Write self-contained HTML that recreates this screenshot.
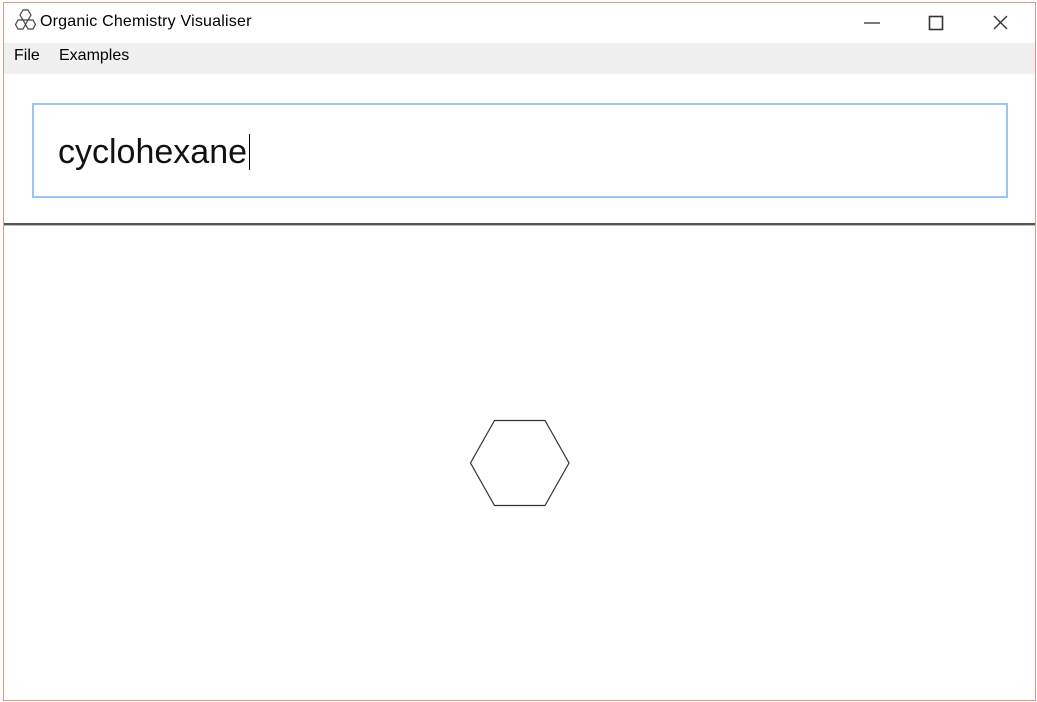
<!DOCTYPE html>
<html><head><style>
body{margin:0;width:1037px;height:702px;background:#fff;position:relative;overflow:hidden;font-family:"Segoe UI","Liberation Sans",sans-serif;}
.win{position:absolute;left:3px;top:2px;width:1031px;height:697px;border:1px solid #d49a88;background:#fff;}
.title{position:absolute;left:40px;top:13px;font-size:16px;color:#000;letter-spacing:0.2px;}
.menu{position:absolute;left:4px;top:43px;width:1031px;height:31px;background:#f0f0f0;font-size:16px;}
.menu span{position:absolute;top:4px;}
.input{position:absolute;left:32px;top:103px;width:972px;height:91px;border:2px solid #99c5f2;box-sizing:content-box;}
.input .t{position:absolute;left:24px;top:28px;font-size:34px;color:#111;}
.caret{display:inline-block;width:1px;height:36px;background:#000;vertical-align:-7px;margin-left:2px;}
.sep{position:absolute;left:4px;top:223px;width:1031px;height:2px;background:#555;border-bottom:1px solid #bbb;}
</style></head><body>
<div class="win"></div>
<svg style="position:absolute;left:13px;top:9px" width="26" height="25" viewBox="0 0 26 25" fill="none" stroke="#444" stroke-width="1.2">
<polygon points="10,1 15,1 18,6 15,11 10,11 7,6"/>
<polygon points="5,11 10,11 12.5,15.5 10,20 5,20 2.5,15.5"/>
<polygon points="15,11 20,11 22.5,15.5 20,20 15,20 12.5,15.5"/>
</svg>
<div class="title">Organic Chemistry Visualiser</div>
<svg style="position:absolute;left:860px;top:12px" width="160" height="22" fill="none" stroke="#333" stroke-width="1.3">
<line x1="4" y1="11" x2="20" y2="11"/>
<rect x="69.5" y="4.5" width="13" height="13" stroke-width="1.6"/>
<line x1="134" y1="4" x2="147" y2="17"/><line x1="147" y1="4" x2="134" y2="17"/>
</svg>
<div class="menu"><span style="left:10px">File</span><span style="left:55px">Examples</span></div>
<div class="input"><div class="t">cyclohexane<span class="caret"></span></div></div>
<div class="sep"></div>
<svg style="position:absolute;left:0;top:0" width="1037" height="702">
<polygon points="470.5,463 494.5,420.5 545,420.5 569,463 545,505.5 494.5,505.5" fill="none" stroke="#333" stroke-width="1.2"/>
</svg>
</body></html>
